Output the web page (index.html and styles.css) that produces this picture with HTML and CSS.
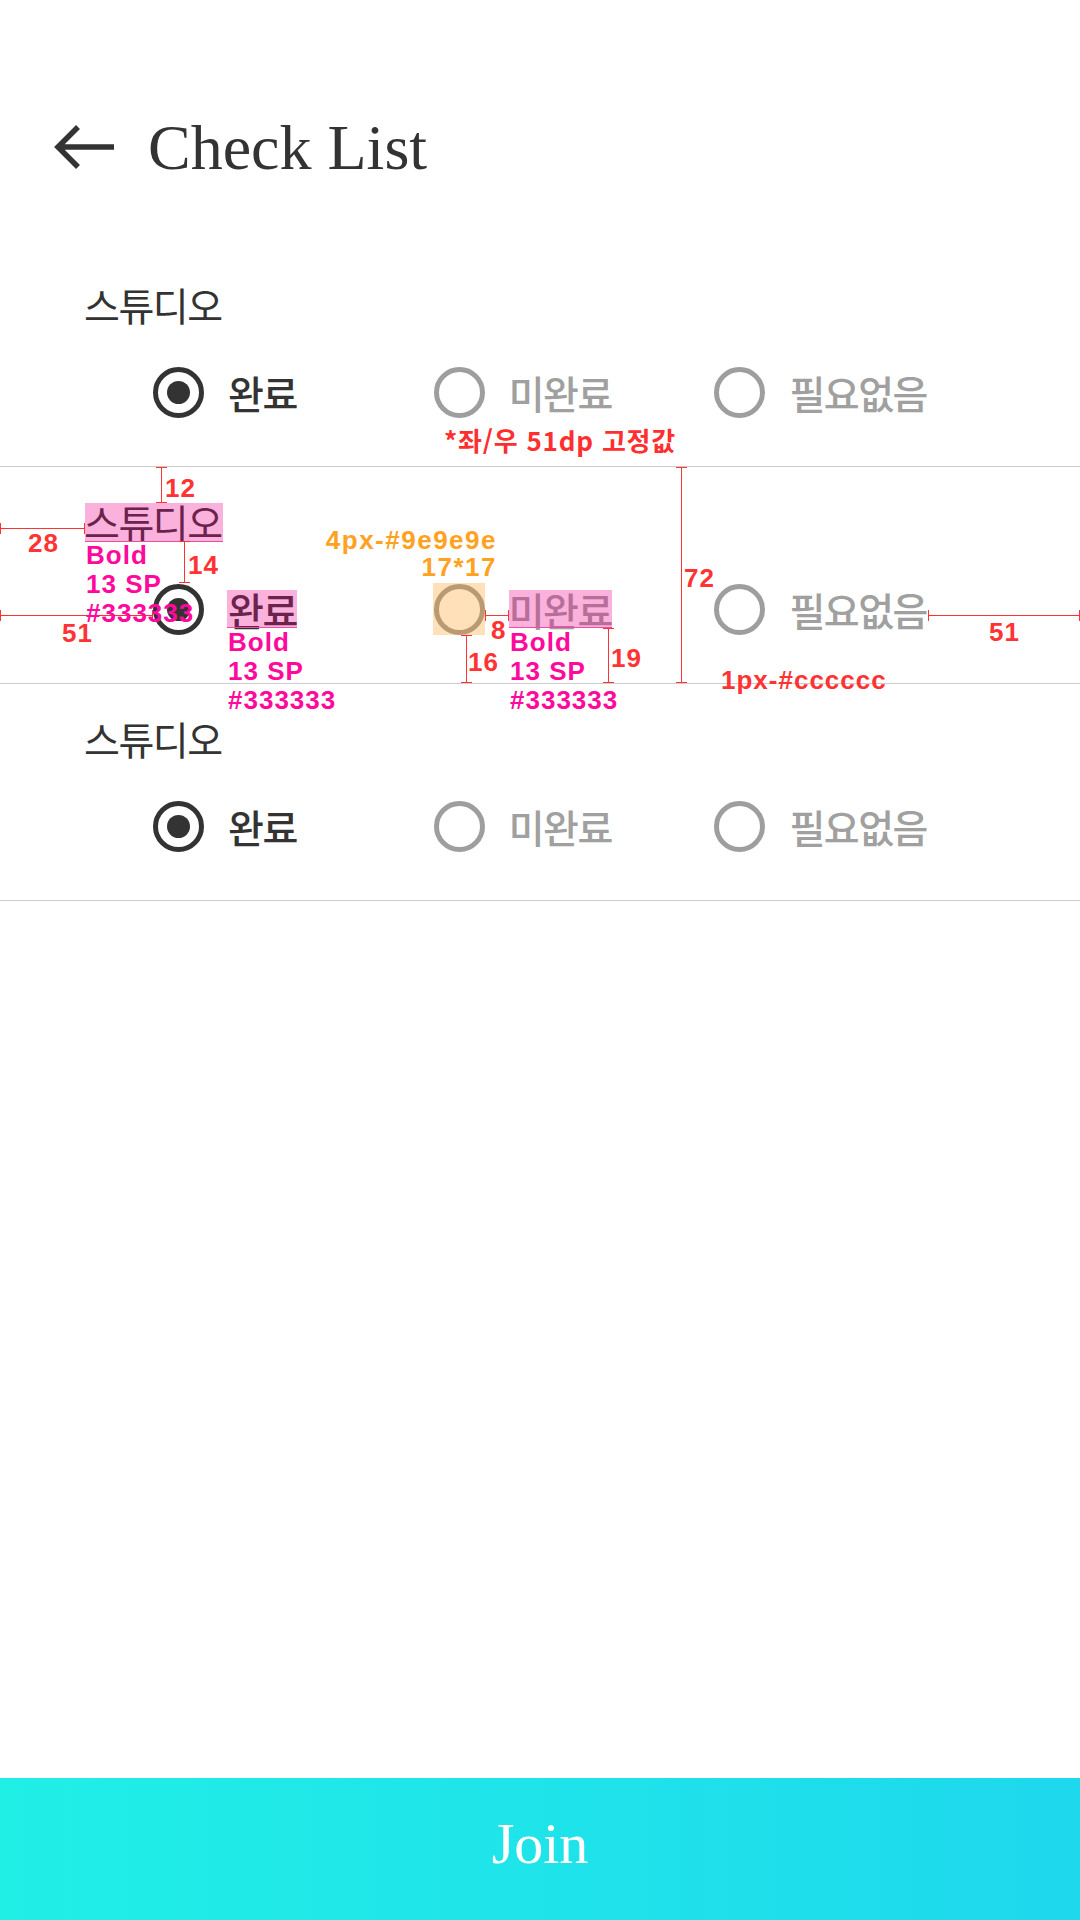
FILE: index.html
```html
<!DOCTYPE html>
<html lang="ko">
<head>
<meta charset="utf-8">
<title>Check List</title>
<link rel="stylesheet" href="styles.css">
</head>
<body>
<header class="appbar">
  <svg class="back-icon" viewBox="0 0 64 64" width="64" height="64" aria-hidden="true">
    <path d="M61 35H6M25 15L5 35l20 20" fill="none" stroke="#333" stroke-width="5.5"/>
  </svg>
  <h1 class="appbar-title">Check List</h1>
</header>

<main class="checklist">
  <section class="check-item">
    <h2 class="item-title">스튜디오</h2>
    <div class="options">
      <div class="option is-selected"><span class="radio"></span><span class="option-label">완료</span></div>
      <div class="option"><span class="radio"></span><span class="option-label">미완료</span></div>
      <div class="option"><span class="radio"></span><span class="option-label">필요없음</span></div>
    </div>
  </section>

  <section class="check-item has-spec">
    <h2 class="item-title">스튜디오</h2>
    <div class="options">
      <div class="option is-selected"><span class="radio"></span><span class="option-label">완료</span></div>
      <div class="option"><span class="radio"></span><span class="option-label">미완료</span></div>
      <div class="option"><span class="radio"></span><span class="option-label">필요없음</span></div>
    </div>

    <div class="spec-layer">
      <div class="spec-fixed">*좌/우 51dp 고정값</div>

      <div class="hl hl-title"></div>
      <div class="hl hl-done"></div>
      <div class="hl hl-undone"></div>
      <div class="hl-radio"></div>

      <div class="dim-v dim-12"></div>
      <div class="dim-h dim-28"></div>
      <div class="dim-v dim-14"></div>
      <div class="dim-h dim-51l"></div>
      <div class="dim-h dim-8"></div>
      <div class="dim-v dim-16"></div>
      <div class="dim-v dim-19"></div>
      <div class="dim-v dim-72"></div>
      <div class="dim-h dim-51r"></div>

      <div class="num num-12">12</div>
      <div class="num num-28">28</div>
      <div class="num num-14">14</div>
      <div class="num num-51l">51</div>
      <div class="num num-8">8</div>
      <div class="num num-16">16</div>
      <div class="num num-19">19</div>
      <div class="num num-72">72</div>
      <div class="num num-51r">51</div>
      <div class="num num-line">1px-#cccccc</div>

      <div class="note note-title">Bold<br>13 SP<br>#333333</div>
      <div class="note note-done">Bold<br>13 SP<br>#333333</div>
      <div class="note note-undone">Bold<br>13 SP<br>#333333</div>
      <div class="note-orange">4px-#9e9e9e<br>17*17</div>
    </div>
  </section>

  <section class="check-item">
    <h2 class="item-title">스튜디오</h2>
    <div class="options">
      <div class="option is-selected"><span class="radio"></span><span class="option-label">완료</span></div>
      <div class="option"><span class="radio"></span><span class="option-label">미완료</span></div>
      <div class="option"><span class="radio"></span><span class="option-label">필요없음</span></div>
    </div>
  </section>
</main>

<button class="join-button" type="button">Join</button>
</body>
</html>
```

FILE: styles.css
```css
html, body {
  margin: 0;
  padding: 0;
}

body {
  width: 1080px;
  height: 1920px;
  display: flex;
  flex-direction: column;
  background: #fff;
  font-family: "Noto Sans CJK KR", "Noto Sans", sans-serif;
  color: #333;
  overflow: hidden;
}

/* ---------- App bar ---------- */
.appbar {
  height: 250px;
  box-sizing: border-box;
  padding: 112px 0 0 53px;
  display: flex;
  align-items: flex-start;
  flex-shrink: 0;
}

.back-icon {
  display: block;
  flex-shrink: 0;
}

.appbar-title {
  margin: 4px 0 0 31px;
  font-family: "Liberation Serif", "Times New Roman", serif;
  font-weight: 400;
  font-size: 64px;
  line-height: 64px;
  color: #333;
}

/* ---------- Checklist ---------- */
.checklist {
  flex: 1;
}

.check-item {
  position: relative;
  height: 217px;
  box-sizing: border-box;
  padding-top: 35px;
  border-bottom: 1px solid #ccc;
}

.item-title {
  margin: 0 0 43px 84px;
  font-size: 39px;
  line-height: 39px;
  font-weight: 400;
  letter-spacing: -1.5px;
  color: #333;
}

.options {
  display: grid;
  grid-template-columns: 1fr 1fr auto;
  padding: 0 153px;
  height: 51px;
}

.option {
  display: flex;
  align-items: center;
  gap: 24px;
}

.radio {
  width: 51px;
  height: 51px;
  box-sizing: border-box;
  border: 5px solid #9e9e9e;
  border-radius: 50%;
  display: grid;
  place-items: center;
  flex-shrink: 0;
}

.option-label {
  font-size: 39px;
  line-height: 39px;
  font-weight: 500;
  letter-spacing: -1.5px;
  color: #a0a0a0;
}

.is-selected .radio {
  border-color: #333;
}

.is-selected .radio::after {
  content: "";
  width: 23px;
  height: 23px;
  border-radius: 50%;
  background: #333;
}

.is-selected .option-label {
  color: #333;
}

/* ---------- Join button ---------- */
.join-button {
  flex-shrink: 0;
  width: 100%;
  height: 142px;
  border: 0;
  margin: 0;
  padding: 0 0 10px;
  display: flex;
  align-items: center;
  justify-content: center;
  background: linear-gradient(90deg, #20efe6 0%, #1ed8ed 100%);
  color: #fff;
  font-family: "Liberation Serif", "Times New Roman", serif;
  font-size: 58px;
  line-height: 58px;
}

/* ---------- Spec annotations (overlay) ---------- */
.spec-layer {
  position: absolute;
  inset: 0;
  pointer-events: none;
  font-family: "Liberation Sans", Arial, sans-serif;
  font-weight: 700;
  letter-spacing: 1px;
}

.spec-layer > * {
  position: absolute;
}

.spec-fixed {
  left: 444px;
  top: -40px;
  font-family: "Noto Sans CJK KR", sans-serif;
  font-size: 26px;
  line-height: 26px;
  font-weight: 700;
  letter-spacing: 0.8px;
  color: #ff2f2f;
  white-space: nowrap;
}

.hl {
  background: rgba(240, 0, 140, 0.3);
  border-bottom: 1px solid #f04aa8;
}

.hl-title { left: 85px; top: 36px; width: 138px; height: 38px; }
.hl-done { left: 227px; top: 123px; width: 70px; height: 37px; }
.hl-undone { left: 509px; top: 123px; width: 103px; height: 37px; }

.hl-radio {
  left: 433px;
  top: 116px;
  width: 52px;
  height: 52px;
  background: rgba(255, 144, 0, 0.28);
}

.dim-v,
.dim-h {
  background: #ff3333;
}

.dim-v { width: 1px; }
.dim-h { height: 1px; }

.dim-v::before,
.dim-v::after,
.dim-h::before,
.dim-h::after {
  content: "";
  position: absolute;
  background: #ff3333;
}

.dim-v::before,
.dim-v::after {
  left: -5px;
  width: 11px;
  height: 1px;
}

.dim-v::before { top: 0; }
.dim-v::after { bottom: 0; }

.dim-h::before,
.dim-h::after {
  top: -5px;
  width: 1px;
  height: 11px;
}

.dim-h::before { left: 0; }
.dim-h::after { right: 0; }

.dim-12 { left: 161px; top: 0; height: 36px; }
.dim-28 { left: 0; top: 61px; width: 85px; }
.dim-14 { left: 184px; top: 74px; height: 42px; }
.dim-51l { left: 0; top: 148px; width: 153px; }
.dim-8 { left: 485px; top: 148px; width: 24px; }
.dim-16 { left: 466px; top: 168px; height: 48px; }
.dim-19 { left: 608px; top: 161px; height: 55px; }
.dim-72 { left: 681px; top: 0; height: 216px; }
.dim-51r { left: 928px; top: 148px; width: 152px; }

.num {
  font-size: 26px;
  line-height: 26px;
  color: #ff3333;
  white-space: nowrap;
}

.num-12 { left: 165px; top: 8px; }
.num-28 { left: 28px; top: 63px; }
.num-14 { left: 188px; top: 85px; }
.num-51l { left: 62px; top: 153px; }
.num-8 { left: 491px; top: 150px; }
.num-16 { left: 468px; top: 182px; }
.num-19 { left: 611px; top: 178px; }
.num-72 { left: 684px; top: 98px; }
.num-51r { left: 989px; top: 152px; }
.num-line { left: 721px; top: 200px; }

.note {
  font-size: 26px;
  line-height: 29px;
  color: #ff0a9c;
  white-space: nowrap;
}

.note-title { left: 86px; top: 74px; }
.note-done { left: 228px; top: 161px; }
.note-undone { left: 510px; top: 161px; }

.note-orange {
  right: 583px;
  top: 60px;
  font-size: 26px;
  line-height: 27px;
  letter-spacing: 1.5px;
  text-align: right;
  color: #ffa21f;
  white-space: nowrap;
}
```
